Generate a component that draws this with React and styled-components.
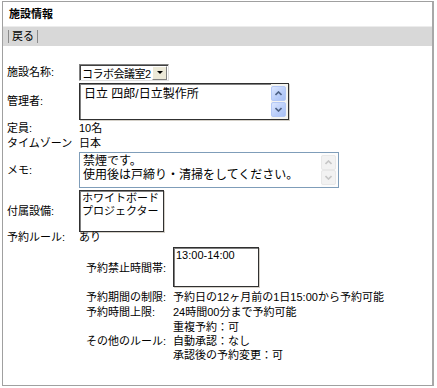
import React from "react";
import styled, { createGlobalStyle } from "styled-components";

const GlobalStyle = createGlobalStyle`
  body {
    margin: 0;
    background: #fff;
    font-family: "Liberation Sans", "Noto Sans CJK JP", sans-serif;
    font-size: 11px;
    color: #000;
  }
`;

const Frame = styled.div`
  margin: 1px 0 0 2px;
  width: 432px;
  height: 385px;
  border: 1px solid #a0a0a0;
  border-right: 2px solid #a8a8a8;
  box-sizing: border-box;
  display: flex;
  flex-direction: column;
`;

const Title = styled.div`
  height: 25px;
  padding: 0 0 3px 6px;
  box-sizing: border-box;
  display: flex;
  align-items: center;
  font-weight: bold;
  font-size: 11px;
  border-bottom: 1px solid #ececec;
`;

const Toolbar = styled.div`
  height: 19px;
  background: #d8d8d8;
  display: flex;
  align-items: center;
  padding-left: 5px;
`;

const Sep = styled.span`
  width: 1px;
  height: 13px;
  background: #8a8a8a;
`;

const ToolLink = styled.span`
  padding: 0 3px;
  line-height: 13px;
`;

const Form = styled.div`
  padding: 18px 0 0 4px;
  display: grid;
  grid-template-columns: 72px auto;
  align-items: center;
  justify-items: start;
  row-gap: 2px;
`;

const Label = styled.div`
  line-height: ${(p) => p.$lh || 13}px;
  white-space: nowrap;
  margin-top: ${(p) => (p.$tight ? "-3px" : "0")};
`;

const Value = styled(Label)``;

const Select = styled.div`
  width: 90px;
  height: 17px;
  box-sizing: border-box;
  border: 1px solid;
  border-color: #808080 #e0e0e0 #e0e0e0 #808080;
  box-shadow: inset 1px 1px 0 #404040;
  display: flex;
  align-items: center;
  justify-content: space-between;
  padding: 0 1px 0 2px;
  font-size: 11px;
  white-space: nowrap;
  letter-spacing: -0.5px;
  overflow: hidden;
`;

const DropButton = styled.div`
  flex: none;
  width: 13px;
  height: 12px;
  background: #ece9d8;
  border: 1px solid;
  border-color: #fff #808080 #808080 #fff;
  display: flex;
  align-items: center;
  justify-content: center;
  &::after {
    content: "";
    border-left: 3px solid transparent;
    border-right: 3px solid transparent;
    border-top: 3px solid #000;
  }
`;

const TextBox = styled.div`
  width: ${(p) => p.$w}px;
  height: ${(p) => p.$h}px;
  box-sizing: border-box;
  display: flex;
  border: ${(p) => (p.$flat ? "1px solid #7f9db9" : "1px solid #303030")};
  box-shadow: ${(p) =>
    p.$flat ? "none" : "inset 1px 1px 0 #808080, 1px 1px 0 #d4d0c8"};
  background: #fff;
  margin-bottom: ${(p) => p.$mb || 0}px;
`;

const TextContent = styled.div`
  flex: 1;
  padding: ${(p) => p.$pad || "2px 3px"};
  font-size: ${(p) => p.$size || 12}px;
  line-height: ${(p) => p.$lh || 14}px;
  white-space: pre;
  overflow: hidden;
`;

const ScrollBar = styled.div`
  width: 16px;
  display: flex;
  flex-direction: column;
  justify-content: space-between;
  padding: 2px 1px 2px 0;
  background: ${(p) => (p.$disabled ? "#fcfcfc" : "#f4f4f0")};
`;

const ScrollButton = styled.div`
  width: 15px;
  height: 15px;
  box-sizing: border-box;
  border-radius: 2px;
  border: 1px solid ${(p) => (p.$disabled ? "#e8e8e8" : "#b4c8f6")};
  background: ${(p) =>
    p.$disabled
      ? "#f2f2f2"
      : "linear-gradient(135deg, #dce7ff 0%, #b9cdf9 60%, #a8c0f4 100%)"};
  display: flex;
  align-items: center;
  justify-content: center;
`;

const Chevron = ({ up, disabled }) => (
  <svg width="7" height="5" viewBox="0 0 7 5">
    <path
      d={up ? "M0.5 4 L3.5 1 L6.5 4" : "M0.5 1 L3.5 4 L6.5 1"}
      fill="none"
      stroke={disabled ? "#c6c6c6" : "#4d6185"}
      strokeWidth="1.6"
    />
  </svg>
);

const Scroll = ({ disabled }) => (
  <ScrollBar $disabled={disabled}>
    <ScrollButton $disabled={disabled}>
      <Chevron up disabled={disabled} />
    </ScrollButton>
    <ScrollButton $disabled={disabled}>
      <Chevron disabled={disabled} />
    </ScrollButton>
  </ScrollBar>
);

const Rules = styled.div`
  grid-column: 1 / span 2;
  padding: 1px 0 0 79px;
  display: grid;
  grid-template-columns: 87px auto;
  align-items: center;
  justify-items: start;
  row-gap: 1px;
`;

const ValueList = styled.div`
  display: flex;
  flex-direction: column;
`;

const ListLine = styled.div`
  height: 14px;
  line-height: 14px;
  white-space: nowrap;
`;

export default function App() {
  return (
    <>
      <GlobalStyle />
      <Frame>
        <Title>施設情報</Title>
        <Toolbar>
          <Sep />
          <ToolLink>戻る</ToolLink>
          <Sep />
        </Toolbar>
        <Form>
          <Label>施設名称:</Label>
          <Select>
            コラボ会議室2
            <DropButton />
          </Select>

          <Label>管理者:</Label>
          <TextBox $w={210} $h={37}>
            <TextContent $pad="3px 4px">日立 四郎/日立製作所</TextContent>
            <Scroll />
          </TextBox>

          <Label>定員:</Label>
          <Value>10名</Value>

          <Label>タイムゾーン</Label>
          <Value>日本</Value>

          <Label>メモ:</Label>
          <TextBox $w={260} $h={36} $flat>
            <TextContent $pad="1px 3px">
              {"禁煙です。\n使用後は戸締り・清掃をしてください。"}
            </TextContent>
            <Scroll disabled />
          </TextBox>

          <Label>付属設備:</Label>
          <TextBox $w={85} $h={42}>
            <TextContent $size={11} $lh={13} $pad="1px 2px">
              {"ホワイトボード\nプロジェクター"}
            </TextContent>
          </TextBox>

          <Label $tight>予約ルール:</Label>
          <Value $tight>あり</Value>

          <Rules>
            <Label $lh={14}>予約禁止時間帯:</Label>
            <TextBox $w={86} $h={40} $mb={2}>
              <TextContent $size={11} $lh={13} $pad="1px 2px">
                13:00-14:00
              </TextContent>
            </TextBox>

            <Label $lh={14}>予約期間の制限:</Label>
            <Value $lh={14}>予約日の12ヶ月前の1日15:00から予約可能</Value>

            <Label $lh={14}>予約時間上限:</Label>
            <Value $lh={14}>24時間00分まで予約可能</Value>

            <Label $lh={14}>その他のルール:</Label>
            <ValueList>
              <ListLine>重複予約：可</ListLine>
              <ListLine>自動承認：なし</ListLine>
              <ListLine>承認後の予約変更：可</ListLine>
            </ValueList>
          </Rules>
        </Form>
      </Frame>
    </>
  );
}
